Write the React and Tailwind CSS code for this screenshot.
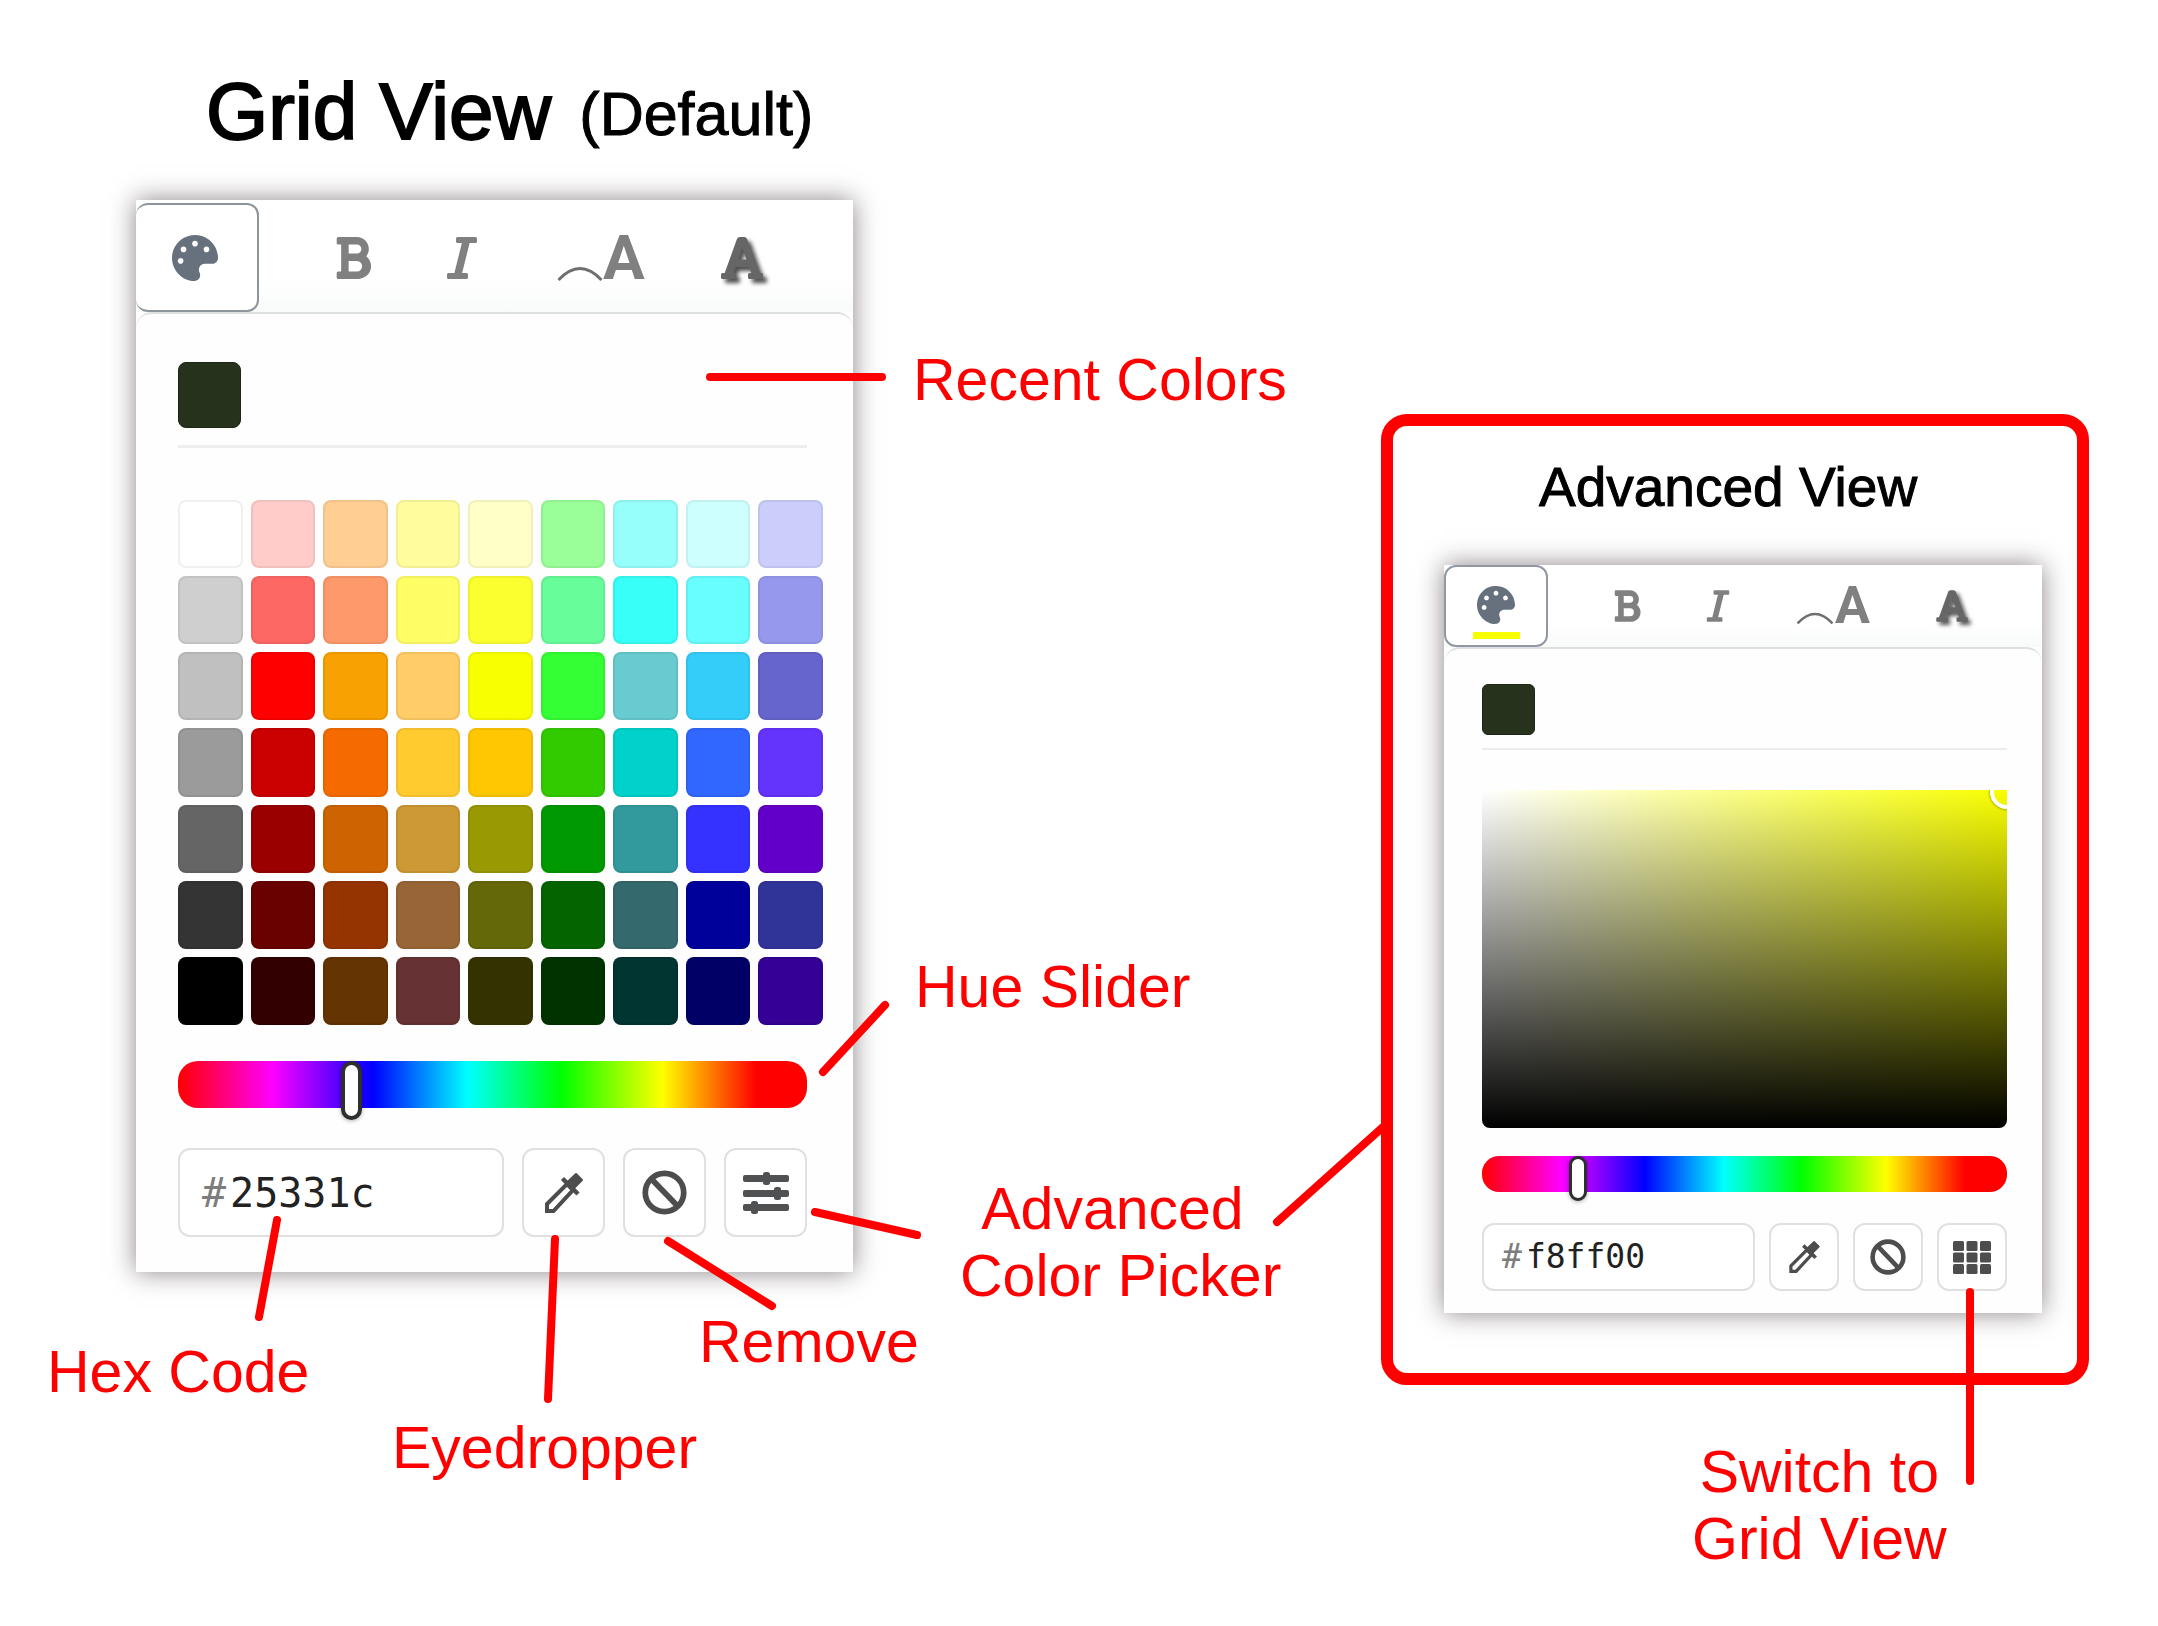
import React from "react";
import { FaPalette, FaBold, FaItalic, FaFont } from "react-icons/fa";

const SWATCHES = [
  ["#ffffff", "#ffccc9", "#ffce93", "#fffc9e", "#ffffc7", "#9aff99", "#96fffb", "#cdffff", "#cbcefb"],
  ["#cfcfcf", "#fd6864", "#fe996b", "#fffe65", "#fcff2f", "#67fd9a", "#38fff8", "#68fdff", "#9698ed"],
  ["#c0c0c0", "#fe0000", "#f8a102", "#ffcc67", "#f8ff00", "#34ff34", "#68cbd0", "#34cdf9", "#6665cd"],
  ["#9b9b9b", "#cb0000", "#f56b00", "#ffcb2f", "#ffc702", "#32cb00", "#00d2cb", "#3166ff", "#6434fc"],
  ["#656565", "#9a0000", "#ce6301", "#cd9934", "#999903", "#009901", "#329a9d", "#3531ff", "#6200c9"],
  ["#343434", "#680100", "#963400", "#986536", "#646809", "#036400", "#34696d", "#00009b", "#303498"],
  ["#000000", "#330001", "#643403", "#663234", "#343300", "#013300", "#003532", "#010066", "#340096"],
];

const CARD = "bg-[#fefefe] shadow-[0_0_24px_rgba(45,30,35,0.55)]";
const HUE =
  "block w-full cursor-pointer appearance-none bg-[linear-gradient(to_right,#f00_0%,#f0f_15%,#00f_31%,#0ff_46%,#0f0_61%,#ff0_77%,#f00_92%)] [&::-webkit-slider-runnable-track]:h-full [&::-webkit-slider-thumb]:appearance-none [&::-webkit-slider-thumb]:rounded-full [&::-webkit-slider-thumb]:border-[#2d2f31] [&::-webkit-slider-thumb]:bg-white [&::-webkit-slider-thumb]:shadow-[0_1px_4px_rgba(0,0,0,0.3)]";
const BOX = "border-2 border-[#e0e0e0] bg-white";

function ArcIcon({ className }) {
  return (
    <svg viewBox="0 0 46 16" fill="none" className={className} aria-hidden="true">
      <path d="M1.500 14Q23-9 44.500 14" stroke="#6f6f6f" strokeWidth="3" />
    </svg>
  );
}

function EyedropperIcon({ className }) {
  return (
    <svg viewBox="0 0 38 40" fill="none" stroke="#4d4d4d" className={className} aria-hidden="true">
      <path d="M2 31 22 11 28 17 8.500 38H2Z" strokeWidth="4" />
      <path d="M17.500 5.500 33 21" strokeWidth="4.500" />
      <path d="M21 10.500 31 1 37 7 27 17Z" fill="#4d4d4d" strokeWidth="2" strokeLinejoin="round" />
    </svg>
  );
}

function RemoveIcon({ className }) {
  return (
    <svg viewBox="0 0 44 44" fill="none" stroke="#4d4d4d" strokeWidth="5.600" className={className} aria-hidden="true">
      <circle cx="22" cy="22" r="18.800" />
      <path d="M9 8.500 35 35.500" />
    </svg>
  );
}

function SlidersIcon({ className }) {
  return (
    <svg viewBox="0 0 46 42" fill="#4f5153" className={className} aria-hidden="true">
      <rect x="0" y="3" width="46" height="7" rx="2" />
      <rect x="0" y="18" width="46" height="7" rx="2" />
      <rect x="0" y="32" width="46" height="7" rx="2" />
      <rect x="20" y="0" width="7" height="13" rx="2.500" />
      <rect x="31" y="15" width="7" height="13" rx="2.500" />
      <rect x="8" y="29" width="7" height="13" rx="2.500" />
    </svg>
  );
}

function GridIcon({ className }) {
  const cells = [0, 1, 2].flatMap((r) => [0, 1, 2].map((c) => [c, r]));
  return (
    <svg viewBox="0 0 38 33" fill="#4d4d4d" className={className} aria-hidden="true">
      {cells.map(([c, r]) => (
        <rect key={`${c}-${r}`} x={c * 13.5} y={r * 11.5} width="11" height="10" rx="1.500" />
      ))}
    </svg>
  );
}

function Connector({ points }) {
  return (
    <svg
      className="pointer-events-none absolute top-0 left-0 h-px w-px overflow-visible"
      fill="none"
      stroke="#ff0000"
      strokeWidth="8"
      strokeLinecap="round"
      aria-hidden="true"
    >
      <path d={points} />
    </svg>
  );
}

function Callout({ className, children }) {
  return (
    <p className={`absolute text-center text-[59px] leading-[67px] whitespace-nowrap text-[#ff0000] ${className}`}>
      {children}
    </p>
  );
}

function HexField({ id, value, className, hashClass }) {
  return (
    <div className={`flex min-w-0 flex-1 items-center font-['DejaVu_Sans_Mono',monospace] ${BOX} ${className}`}>
      <label htmlFor={id} className={`text-[#7d7d7d] ${hashClass}`}>
        #
      </label>
      <input
        id={id}
        type="text"
        aria-label="Hex code"
        defaultValue={value}
        className="w-full min-w-0 bg-transparent text-[#222222] outline-none"
      />
    </div>
  );
}

function GridPicker() {
  return (
    <section className={CARD} aria-label="Grid color picker">
      <header className="flex h-[112px] items-stretch gap-[76px] bg-linear-to-b from-white from-70% to-[#f9fafa] pt-[3px]">
        <button
          type="button"
          aria-label="Color"
          className="flex w-[123px] items-center justify-center rounded-xl border-2 border-l-0 border-[#8d949b] bg-white pr-1"
        >
          <FaPalette className="h-[46px] w-[46px] text-[#67717d]" />
        </button>
        <button type="button" aria-label="Bold">
          <FaBold className="h-12 w-[36px] text-[#808080]" />
        </button>
        <button type="button" aria-label="Italic">
          <FaItalic className="h-12 w-[30px] text-[#808080]" />
        </button>
        <button type="button" aria-label="Curved text" className="flex items-center pl-1 text-[#808080]">
          <ArcIcon className="mt-8 h-4 w-[46px]" />
          <span className="font-[Roboto,sans-serif] text-[62px] leading-none font-bold">A</span>
        </button>
        <button type="button" aria-label="Text shadow">
          <FaFont className="h-12 w-[42px] text-[#666666] drop-shadow-[4px_4px_2px_rgba(0,0,0,0.7)]" />
        </button>
      </header>
      <div className="rounded-t-2xl border-t-2 border-[#dde0e0] bg-[#fefefe] pt-12 pr-[46px] pb-[35px] pl-[42px]">
        <button
          type="button"
          aria-label="#25331c"
          className="block h-[66px] w-[63px] rounded-lg border border-[#1c2613] bg-[#27321d]"
        />
        <hr className="mt-[17px] border-t-3 border-[#eeeeee]" />
        <div className="mt-[52px] -mr-4 grid h-[525px] grid-cols-9 grid-rows-7 gap-2">
          {SWATCHES.flat().map((color) => (
            <button
              key={color}
              type="button"
              aria-label={color}
              className="rounded-lg border-2 border-black/6"
              style={{ backgroundColor: color }}
            />
          ))}
        </div>
        <input
          type="range"
          aria-label="Hue"
          min="0"
          max="1000"
          defaultValue="268"
          className={`mt-9 h-[47px] rounded-[20px] [&::-webkit-slider-thumb]:h-[59px] [&::-webkit-slider-thumb]:w-[21px] [&::-webkit-slider-thumb]:border-4 ${HUE}`}
        />
        <div className="mt-10 flex h-[89px] gap-[18px]">
          <HexField id="hex-grid" value="25331c" className="rounded-xl pl-[22px] text-[40px]" hashClass="mr-1" />
          <button type="button" aria-label="Eyedropper" className={`flex w-[83px] items-center justify-center rounded-xl ${BOX}`}>
            <EyedropperIcon className="h-10 w-[38px]" />
          </button>
          <button type="button" aria-label="Remove" className={`flex w-[83px] items-center justify-center rounded-xl ${BOX}`}>
            <RemoveIcon className="h-[45px] w-[45px]" />
          </button>
          <button type="button" aria-label="Advanced color picker" className={`flex w-[83px] items-center justify-center rounded-xl ${BOX}`}>
            <SlidersIcon className="h-[42px] w-[46px]" />
          </button>
        </div>
      </div>
    </section>
  );
}

function AdvancedPicker() {
  return (
    <section className={CARD} aria-label="Advanced color picker">
      <header className="flex h-[82px] items-stretch gap-[65px] bg-linear-to-b from-white from-70% to-[#f9fafa]">
        <button
          type="button"
          aria-label="Color"
          className="flex w-[104px] flex-col items-center justify-end gap-2 rounded-xl border-2 border-[#9298a3] bg-white pb-[6px]"
        >
          <FaPalette className="h-[38px] w-[38px] text-[#67717d]" />
          <span className="h-[7px] w-[47px] bg-[#f8ff00]" />
        </button>
        <button type="button" aria-label="Bold">
          <FaBold className="h-9 w-[28px] text-[#808080]" />
        </button>
        <button type="button" aria-label="Italic">
          <FaItalic className="h-9 w-[24px] text-[#808080]" />
        </button>
        <button type="button" aria-label="Curved text" className="flex items-center text-[#808080]">
          <ArcIcon className="mt-6 h-[13px] w-[40px]" />
          <span className="font-[Roboto,sans-serif] text-[52px] leading-none font-bold">A</span>
        </button>
        <button type="button" aria-label="Text shadow">
          <FaFont className="h-9 w-[34px] text-[#666666] drop-shadow-[3px_3px_2px_rgba(0,0,0,0.7)]" />
        </button>
      </header>
      <div className="rounded-t-2xl border-t-2 border-[#dde0e0] bg-[#fefefe] pt-[35px] pr-[35px] pb-[22px] pl-[38px]">
        <button
          type="button"
          aria-label="#25331c"
          className="block h-[51px] w-[53px] rounded-md border border-[#1c2613] bg-[#27321d]"
        />
        <hr className="mt-[13px] border-t-2 border-[#ececec]" />
        <div className="relative mt-10 h-[338px] overflow-hidden rounded-b-lg bg-[linear-gradient(to_top,#000,transparent),linear-gradient(to_right,#fff,#f8ff00)]">
          <span className="absolute -top-[15px] -right-[17px] h-[34px] w-[34px] rounded-full border-4 border-white shadow-[0_0_3px_rgba(0,0,0,0.6)]" />
        </div>
        <input
          type="range"
          aria-label="Hue"
          min="0"
          max="1000"
          defaultValue="171"
          className={`mt-7 h-9 rounded-[17px] [&::-webkit-slider-thumb]:h-[45px] [&::-webkit-slider-thumb]:w-[18px] [&::-webkit-slider-thumb]:border-3 ${HUE}`}
        />
        <div className="mt-[31px] flex h-[68px] gap-[14px]">
          <HexField id="hex-advanced" value="f8ff00" className="rounded-xl pl-[18px] text-[33px]" hashClass="mr-1" />
          <button type="button" aria-label="Eyedropper" className={`flex w-[70px] items-center justify-center rounded-xl ${BOX}`}>
            <EyedropperIcon className="h-8 w-[31px]" />
          </button>
          <button type="button" aria-label="Remove" className={`flex w-[70px] items-center justify-center rounded-xl ${BOX}`}>
            <RemoveIcon className="h-9 w-9" />
          </button>
          <button type="button" aria-label="Switch to grid view" className={`flex w-[70px] items-center justify-center rounded-xl ${BOX}`}>
            <GridIcon className="h-[33px] w-[38px]" />
          </button>
        </div>
      </div>
    </section>
  );
}

export default function App() {
  return (
    <main className="flex min-h-screen w-full items-start justify-between overflow-hidden bg-white pr-[69px] pl-[136px] font-['Liberation_Sans',Arial,sans-serif] text-black">
      <div className="relative w-full max-w-[717px] pt-[72px]">
        <h1 className="mb-12 flex items-center gap-7 pl-[70px] text-[80px] leading-[80px] whitespace-nowrap [-webkit-text-stroke:2px_black]">
          Grid View
          <span className="pt-1 text-[61px] leading-[67px] [-webkit-text-stroke:1px_black]">(Default)</span>
        </h1>
        <GridPicker />
        <Callout className="top-[347px] left-[777px]">Recent Colors</Callout>
        <Callout className="top-[954px] left-[779px]">Hue Slider</Callout>
        <Callout className="top-[1176px] left-[824px]">
          {"Advanced\u00a0"}
          <br />
          Color Picker
        </Callout>
        <Callout className="top-[1309px] left-[563px]">Remove</Callout>
        <Callout className="top-[1415px] left-[256px]">Eyedropper</Callout>
        <Callout className="top-[1339px] -left-[89px]">Hex Code</Callout>
        <Connector points="M574 377H746M687 1072 749 1005M679 1212 781 1235M1141 1222 1247 1127M532 1241 636 1306M419 1239 412 1399M141 1220 123 1317" />
      </div>
      <div className="relative mt-[414px] w-full max-w-[708px]">
        <div className="rounded-[26px] border-12 border-[#ff0000] pt-[33px] pr-[35px] pb-[60px] pl-[51px]">
          <h2 className="mb-[50px] pl-[95px] text-[55px] leading-[56px] whitespace-nowrap [-webkit-text-stroke:1px_black]">
            Advanced View
          </h2>
          <AdvancedPicker />
        </div>
        <p className="mt-[54px] ml-[311px] w-fit text-center text-[59px] leading-[67px] whitespace-nowrap text-[#ff0000]">
          Switch to
          <br />
          Grid View
        </p>
        <Connector points="M589 878V1067" />
      </div>
    </main>
  );
}
